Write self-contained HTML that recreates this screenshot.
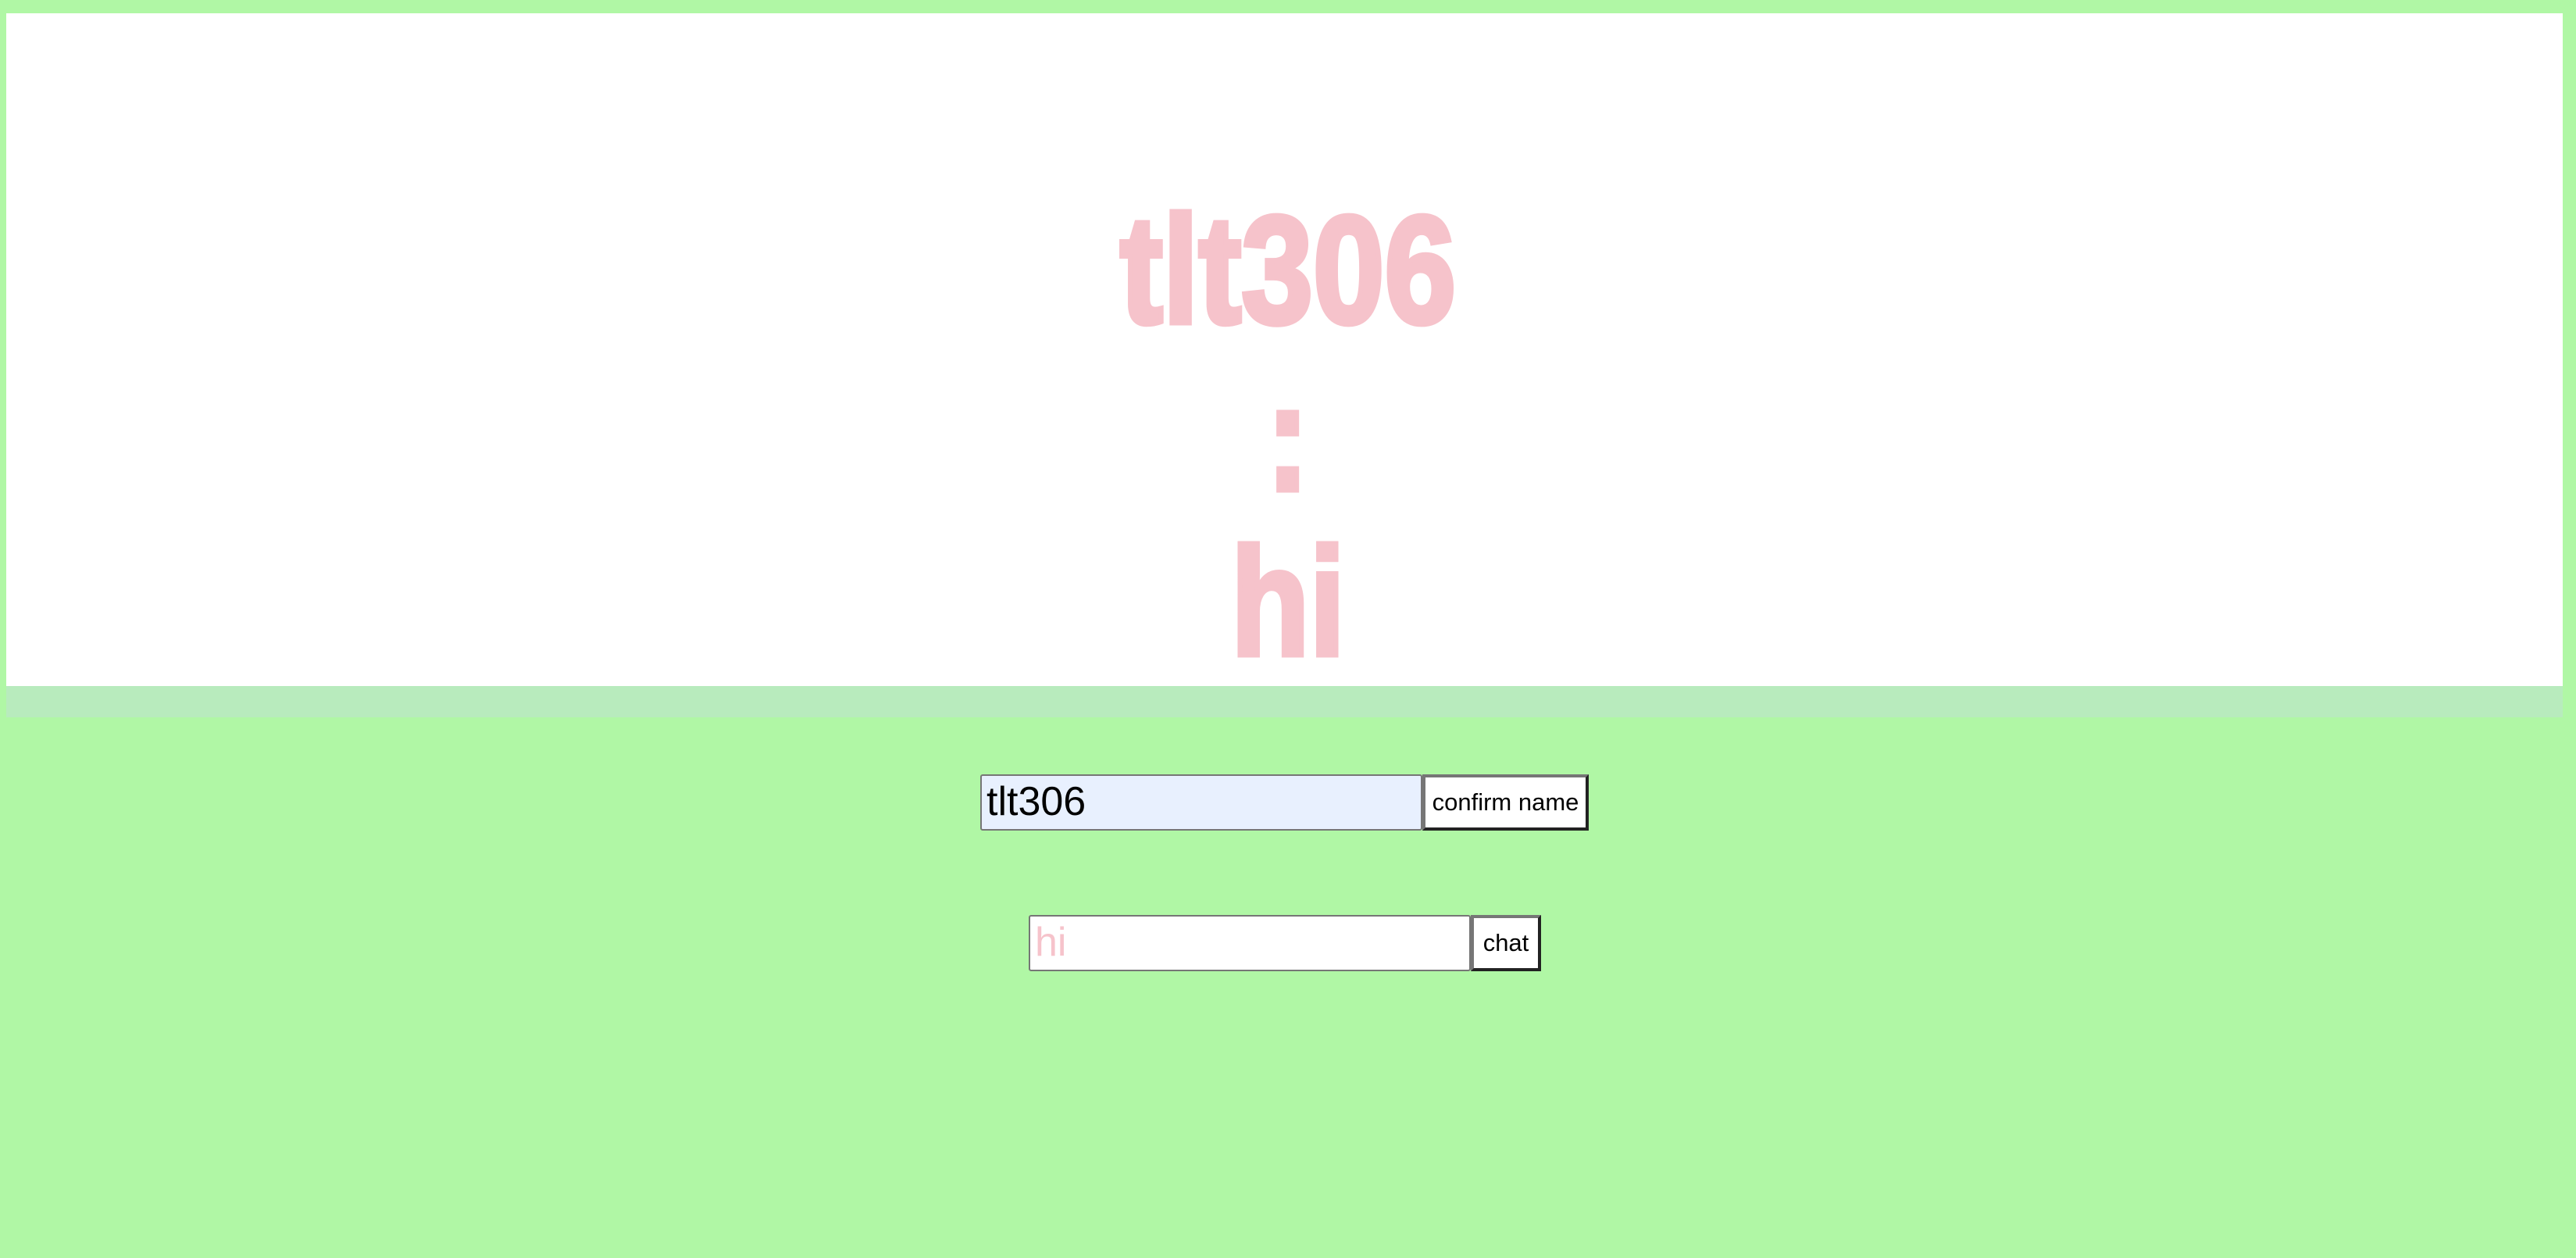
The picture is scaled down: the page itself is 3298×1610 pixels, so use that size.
<!DOCTYPE html>
<html><head><meta charset="utf-8"><style>
html,body{margin:0;padding:0;width:3298px;height:1610px;background:#b0f7a5;overflow:hidden;font-family:"Liberation Sans",Arial,sans-serif}
.box{position:absolute;left:8px;top:17px;width:3273px;height:861px;background:#fff}
.strip{position:absolute;left:8px;top:878px;width:3273px;height:40px;background:#b8ebbd}
.big{position:absolute;left:0;width:3298px;text-align:center;font-weight:bold;font-size:196px;line-height:1;color:#f6c3cb;-webkit-text-stroke:7px #f6c3cb}
.big span{display:inline-block;transform:scaleX(0.84)}
.inp{position:absolute;box-sizing:border-box;border:2px solid #767676;border-radius:3px;font-size:52px;line-height:67px;padding-left:6px}
.btn{position:absolute;box-sizing:border-box;background:#fff;border-style:solid;border-width:4px;border-color:#767676 #222 #222 #767676;font-size:31px;text-align:center;line-height:63px}
</style></head><body>
<div class="box"></div>
<div class="strip"></div>
<div class="big" style="top:248px"><span>tlt306</span></div>
<div class="big" style="top:462px"><span>:</span></div>
<div class="big" style="top:673px"><span>hi</span></div>
<div class="inp" style="left:1255px;top:991px;width:566px;height:72px;background:#e8f0fe;color:#000">tlt306</div>
<div class="btn" style="left:1821px;top:991px;width:213px;height:72px">confirm name</div>
<div class="inp" style="left:1317px;top:1171px;width:566px;height:72px;background:#fff;color:#f6c3cb">hi</div>
<div class="btn" style="left:1883px;top:1171px;width:90px;height:72px">chat</div>
</body></html>
